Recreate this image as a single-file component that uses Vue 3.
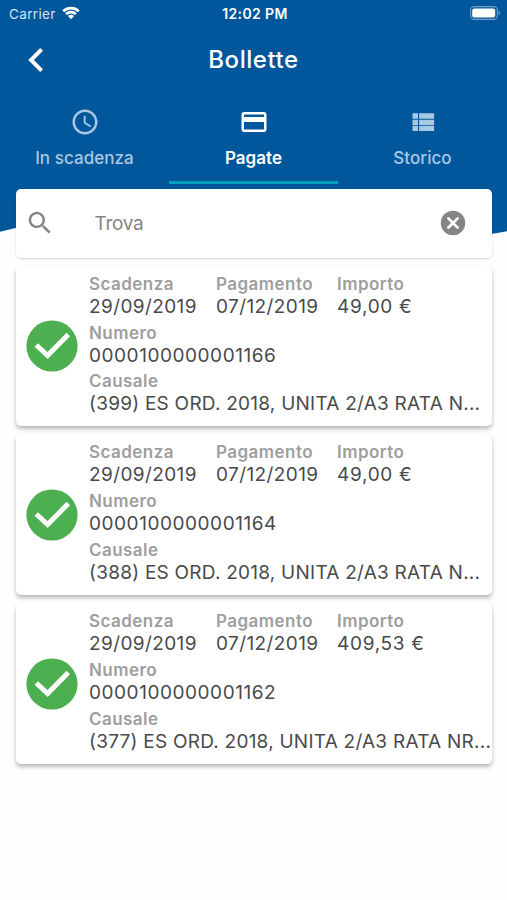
<template>
  <div class="screen">
    <header class="header">
      <div class="status-bar">
        <div class="carrier">
          <span>Carrier</span>
          <svg class="wifi" viewBox="0 0 18 14">
            <path d="M0.3 4.3a12.6 12.6 0 0 1 17.4 0l-1.8 1.9a10 10 0 0 0-13.8 0z" />
            <path d="M3.1 7.2a8.5 8.5 0 0 1 11.8 0l-1.8 1.9a6 6 0 0 0-8.2 0z" />
            <path d="M5.9 10.1a4.5 4.5 0 0 1 6.2 0L9 13.3z" />
          </svg>
        </div>
        <span class="time">12:02 PM</span>
        <svg class="battery" viewBox="0 0 31 14">
          <rect x="0.6" y="0.6" width="26.8" height="12.8" rx="3.6" />
          <rect class="level" x="2.2" y="2.4" width="23" height="9.2" rx="2" />
          <path class="tip" d="M28.6 4.8c2 .8 2 3.6 0 4.4z" />
        </svg>
      </div>

      <div class="toolbar">
        <button class="back" aria-label="Indietro">
          <svg viewBox="0 0 16 24">
            <path d="M13.6 1.4L3 12l10.6 10.6" />
          </svg>
        </button>
        <h1>Bollette</h1>
      </div>

      <nav class="tabs">
        <button
          v-for="tab in tabs"
          :key="tab.label"
          :class="['tab', { active: tab.label === activeTab }]"
          @click="activeTab = tab.label"
        >
          <svg viewBox="0 0 24 24">
            <path :d="tab.icon" />
          </svg>
          <span>{{ tab.label }}</span>
        </button>
      </nav>
    </header>

    <svg class="wave" viewBox="0 0 507 56" preserveAspectRatio="none">
      <path d="M0 0H507V47.3C420 63 330 55 250 46C160 36 80 28 0 47.8Z" />
    </svg>

    <main class="content">
      <div class="search">
        <svg class="search-icon" viewBox="0 0 24 24">
          <path :d="icons.search" />
        </svg>
        <input v-model="query" type="text" placeholder="Trova" />
        <svg class="clear-icon" viewBox="0 0 24 24" @click="query = ''">
          <circle cx="12" cy="12" r="9.8" />
          <path d="M8.3 8.3l7.4 7.4M15.7 8.3l-7.4 7.4" />
        </svg>
      </div>

      <article v-for="bill in bills" :key="bill.number" class="card">
        <svg class="check" viewBox="0 0 52 52">
          <circle cx="26" cy="26" r="25.6" />
          <path d="M10.3 25L21.6 35.6L42.3 14.6" />
        </svg>
        <div class="details">
          <div class="row">
            <div class="field due">
              <span class="label">Scadenza</span>
              <span class="value">{{ bill.due }}</span>
            </div>
            <div class="field paid">
              <span class="label">Pagamento</span>
              <span class="value">{{ bill.paid }}</span>
            </div>
            <div class="field">
              <span class="label">Importo</span>
              <span class="value amount">{{ bill.amount }}</span>
            </div>
          </div>
          <div class="field">
            <span class="label">Numero</span>
            <span class="value number">{{ bill.number }}</span>
          </div>
          <div class="field">
            <span class="label">Causale</span>
            <span class="value reason">{{ bill.reason }}</span>
          </div>
        </div>
      </article>
    </main>
  </div>
</template>

<script setup>
import { ref } from 'vue';

const icons = {
  clock: 'M11.99 2C6.47 2 2 6.48 2 12s4.47 10 9.99 10C17.52 22 22 17.52 22 12S17.52 2 11.99 2zM12 20c-4.42 0-8-3.58-8-8s3.58-8 8-8 8 3.58 8 8-3.58 8-8 8zm.5-13H11v6l5.25 3.15.75-1.23-4.5-2.67z',
  card: 'M20 4H4c-1.11 0-1.99.89-1.99 2L2 18c0 1.11.89 2 2 2h16c1.11 0 2-.89 2-2V6c0-1.11-.89-2-2-2zm0 14H4v-6h16v6zm0-10H4V6h16v2z',
  list: 'M3.6 5h4.4v4.4H3.6zM8.9 5h12v4.4h-12zM3.6 10.1h4.4v4.2H3.6zM8.9 10.1h12v4.2h-12zM3.6 15h4.4v4.2H3.6zM8.9 15h12v4.2h-12z',
  search: 'M15.5 14h-.79l-.28-.27C15.41 12.59 16 11.11 16 9.5 16 5.91 13.09 3 9.5 3S3 5.91 3 9.5 5.91 16 9.5 16c1.61 0 3.09-.59 4.23-1.57l.27.28v.79l5 4.99L20.49 19l-4.99-5zm-6 0C7.01 14 5 11.99 5 9.5S7.01 5 9.5 5 14 7.01 14 9.5 11.99 14 9.5 14z'
};

const tabs = [
  { label: 'In scadenza', icon: icons.clock },
  { label: 'Pagate', icon: icons.card },
  { label: 'Storico', icon: icons.list }
];

const activeTab = ref('Pagate');
const query = ref('');

const bills = [
  {
    due: '29/09/2019',
    paid: '07/12/2019',
    amount: '49,00 €',
    number: '0000100000001166',
    reason: '(399) ES ORD. 2018, UNITA 2/A3 RATA N...'
  },
  {
    due: '29/09/2019',
    paid: '07/12/2019',
    amount: '49,00 €',
    number: '0000100000001164',
    reason: '(388) ES ORD. 2018, UNITA 2/A3 RATA N...'
  },
  {
    due: '29/09/2019',
    paid: '07/12/2019',
    amount: '409,53 €',
    number: '0000100000001162',
    reason: '(377) ES ORD. 2018, UNITA 2/A3 RATA NR...'
  }
];
</script>

<style>
body {
  background: #fefefe;
}
</style>

<style scoped>
.screen {
  min-height: 900px;
  overflow: hidden;
  font-family: Inter, "Liberation Sans", sans-serif;
  background: #fefefe;
}

button {
  padding: 0;
  border: none;
  background: none;
  font: inherit;
}

svg {
  display: block;
}

.header {
  height: 184px;
  background: #01579b;
  color: #fff;
}

/* Status bar */
.status-bar {
  display: grid;
  grid-template-columns: 1fr auto 1fr;
  align-items: center;
  height: 27px;
  padding: 0 6px 0 9px;
  font-size: 13.5px;
}

.carrier {
  display: flex;
  align-items: center;
  gap: 6px;
  color: #d5e4f0;
  letter-spacing: 0.35px;
}

.wifi {
  width: 18px;
  height: 14px;
  margin-top: -2px;
  fill: #fff;
}

.time {
  font-size: 14px;
  font-weight: 600;
  letter-spacing: 0.4px;
}

.battery {
  justify-self: end;
  width: 31px;
  height: 14px;
  margin-top: -1px;
  fill: none;
  stroke: #6f9fc7;
  stroke-width: 1.1;
}

.battery .level {
  fill: #fff;
  stroke: none;
}

.battery .tip {
  fill: #6f9fc7;
  stroke: none;
}

/* Toolbar */
.toolbar {
  display: grid;
  grid-template-columns: 60px 1fr 60px;
  align-items: center;
  height: 66px;
}

.back {
  padding-left: 27.5px;
}

.back svg {
  width: 16px;
  height: 24px;
  fill: none;
  stroke: #fff;
  stroke-width: 4;
}

h1 {
  margin: 0;
  font-size: 24px;
  font-weight: 500;
  line-height: 30px;
  letter-spacing: 0.55px;
  text-align: center;
}

/* Tabs */
.tabs {
  display: grid;
  grid-template-columns: repeat(3, 1fr);
  height: 91px;
}

.tab {
  display: flex;
  flex-direction: column;
  align-items: center;
  padding-top: 13.5px;
  border-bottom: 3px solid transparent;
  color: #a9c8e3;
  font-size: 17px;
  font-weight: 500;
  line-height: 21px;
  letter-spacing: 0.05px;
}

.tab svg {
  width: 30px;
  height: 30px;
  margin-bottom: 11px;
  fill: currentColor;
}

.tab.active {
  border-bottom-color: #009fbf;
  color: #fff;
  font-weight: 600;
}

.wave {
  width: 100%;
  height: 56px;
  fill: #01579b;
}

/* Content */
.content {
  display: flex;
  flex-direction: column;
  gap: 8.2px;
  margin-top: -51px;
  padding: 0 15px 0 15.5px;
}

.search,
.card {
  display: flex;
  align-items: center;
  border-radius: 5px;
  background: #fff;
}

/* Keeps the search box painted above the wave */
.search {
  position: relative;
  height: 68.5px;
  padding: 0 24px 0 9px;
  box-shadow: 0 1px 2px rgba(0, 0, 0, 0.18);
}

.search-icon,
.clear-icon {
  flex: none;
  width: 30px;
  height: 30px;
  fill: #858585;
}

.clear-icon path {
  fill: none;
  stroke: #fff;
  stroke-width: 2.2;
  stroke-linecap: round;
}

input {
  flex: 1;
  min-width: 0;
  padding: 2px 0 0 40px;
  border: none;
  outline: none;
  background: none;
  color: #4a4a4a;
  font: 19px/26px Inter, sans-serif;
  letter-spacing: -0.3px;
}

input::placeholder {
  color: #858585;
  opacity: 1;
}

.card {
  height: 160.5px;
  box-shadow: 0 3px 4px rgba(0, 0, 0, 0.27);
}

.check {
  flex: none;
  width: 52px;
  height: 52px;
  margin: 1px 11px 0 10.5px;
  fill: #4caf50;
}

.check path {
  fill: none;
  stroke: #fff;
  stroke-width: 5;
}

.details {
  flex: 1;
  min-width: 0;
  padding-top: 2px;
}

.row {
  display: flex;
}

.field {
  display: flex;
  flex-direction: column;
  padding-bottom: 3.6px;
  white-space: nowrap;
}

.due {
  width: 127px;
}

.paid {
  width: 121px;
}

.label {
  color: #9e9e9e;
  font-size: 17px;
  font-weight: 600;
  line-height: 21px;
  letter-spacing: 0.45px;
}

.value {
  color: #4a4a4a;
  font-size: 19px;
  line-height: 24.2px;
  letter-spacing: 0.4px;
}

.amount {
  letter-spacing: 0.7px;
}

.number {
  letter-spacing: 0.55px;
}

.reason {
  letter-spacing: 0.24px;
}
</style>
